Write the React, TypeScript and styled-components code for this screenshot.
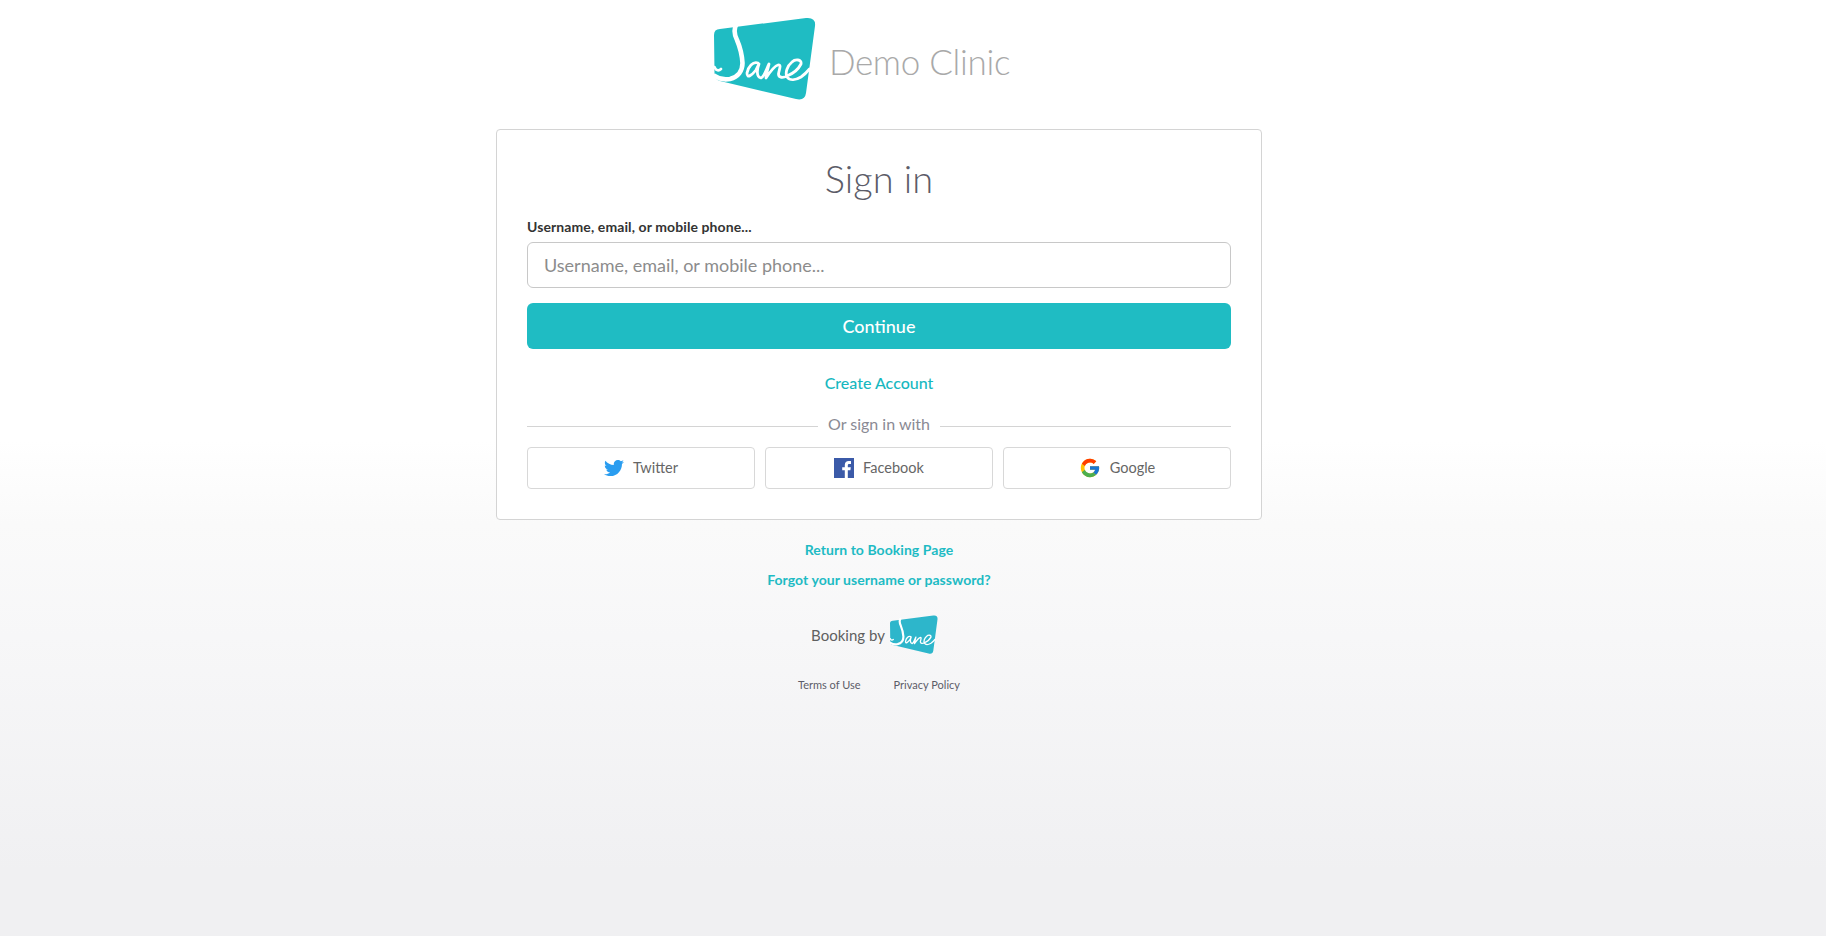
import React from 'react';
import styled, {createGlobalStyle} from "styled-components";
import {FaTwitter} from "react-icons/fa";
import {FcGoogle} from "react-icons/fc";

const GlobalStyle = createGlobalStyle`
    html, body {
        margin: 0;
        padding: 0;
    }
    body {
        font-family: "Lato", "Open Sans", "Liberation Sans", sans-serif;
    }
`

const JaneLogo = ({width, color}: {width: number, color: string}) => (
    <svg width={width} viewBox="0 0 102 84" role="img" aria-label="Jane logo" style={{display: 'block', flexShrink: 0}}>
        <path d="M6 12 L92 1 Q102 0 101 9 L92 76 Q91 84 82 82 L6 64 Q0 62 .5 56 L0 18 Q0 12 6 12 Z" fill={color}/>
        <g fill="none" stroke="#fff" strokeLinecap="round" strokeLinejoin="round">
            <path d="M22 8 C19 14 21 19 23 23 C26 30 28 38 28.500 46 C28.500 54 24 60 16 62 C10 63 5 62 1 59" strokeWidth="4.600"/>
            <path d="M.5 50 C2 54 5 54 7 52" strokeWidth="2.600"/>
            <path d="M44 46 C39 44 34 50 33 56 C33 62 38 58 42 53 L45 47 C43 52 42 60 47 61 C50 60 52 53 55 47 C54 52 52 57 52 61 C56 55 60 49 64 48 C68 47 65 53 64.500 57 C64.500 61 69 61 73 59 C78 57 84 53 87 47 C88 42 81 42 78 45 C73 49 71 56 73 60 C76 64 82 63 87 60 C90 58 93 55 95.500 52" strokeWidth="2.800"/>
        </g>
    </svg>
)

const FacebookIcon = () => (
    <svg width="20" height="20" viewBox="0 0 20 20">
        <rect width="20" height="20" fill="#3b5aa8"/>
        <path d="M13.8 20v-7.7h2.6l.4-3h-3V7.4c0-.9.2-1.5 1.5-1.5H17V3.200c-.3 0-1.200-.1-2.300-.1-2.300 0-3.900 1.400-3.900 4v2.200H8.200v3h2.600V20z" fill="#fff"/>
    </svg>
)

const socials = [
    {name: 'Twitter', icon: <FaTwitter size={20} color="#2a9df0"/>},
    {name: 'Facebook', icon: <FacebookIcon/>},
    {name: 'Google', icon: <FcGoogle size={22}/>},
]

export default function App() {
    return (
        <Page>
            <GlobalStyle/>
            <Column>
                <Header>
                    <JaneLogo width={102} color="#1fbcc3"/>
                    <ClinicName>Demo Clinic</ClinicName>
                </Header>
                <Card>
                    <Title>Sign in</Title>
                    <Label htmlFor="login">Username, email, or mobile phone...</Label>
                    <Input id="login" placeholder="Username, email, or mobile phone..."/>
                    <ContinueButton>Continue</ContinueButton>
                    <CreateAccount href="#">Create Account</CreateAccount>
                    <Divider><span>Or sign in with</span></Divider>
                    <SocialRow>
                        {socials.map(s => (
                            <SocialButton key={s.name}>
                                {s.icon}
                                <SocialName>{s.name}</SocialName>
                            </SocialButton>
                        ))}
                    </SocialRow>
                </Card>
                <FooterLink href="#" $top={21}>Return to Booking Page</FooterLink>
                <FooterLink href="#" $top={13}>Forgot your username or password?</FooterLink>
                <BookingBy>
                    <span>Booking by</span>
                    <JaneLogo width={48} color="#2db6cb"/>
                </BookingBy>
                <LegalRow>
                    <a href="#">Terms of Use</a>
                    <a href="#">Privacy Policy</a>
                </LegalRow>
            </Column>
        </Page>
    );
}

const Page = styled.div`
    min-height: 936px;
    box-sizing: border-box;
    background: linear-gradient(to bottom, #fff 0%, #fff 47%, #fafafa 56%, #f7f7f8 68%, #f0f0f2 93%, #f0f0f2 100%);
    padding-left: 496px;
`

const Column = styled.div`
    width: 766px;
    display: flex;
    flex-direction: column;
    align-items: center;
`

const Header = styled.div`
    display: flex;
    align-items: center;
    gap: 13px;
    height: 117px;
    padding-bottom: 12px;
    margin-left: -34px;
`

const ClinicName = styled.div`
    font-size: 35px;
    font-weight: 300;
    color: #a9a9a9;
    letter-spacing: -0.3px;
    margin-top: 4px;
`

const Card = styled.div`
    width: 100%;
    height: 391px;
    box-sizing: border-box;
    padding: 0 30px;
    background: #fff;
    border: 1px solid #d4d4d4;
    border-radius: 4px;
`

const Title = styled.h1`
    margin: 24px 0 0;
    height: 48px;
    line-height: 48px;
    font-size: 38px;
    font-weight: 300;
    text-align: center;
    color: #5c5c68;
`

const Label = styled.label`
    display: block;
    margin-top: 16px;
    line-height: 18px;
    font-size: 14px;
    font-weight: 700;
    letter-spacing: 0.1px;
    color: #333;
`

const Input = styled.input`
    display: block;
    width: 100%;
    height: 46px;
    margin-top: 6px;
    box-sizing: border-box;
    padding: 0 16px;
    border: 1.5px solid #c8c8c8;
    border-radius: 6px;
    font-family: inherit;
    font-size: 18px;
    color: #333;
    outline: none;

    &::placeholder {
        color: #8c8c8c;
        opacity: 1;
    }
`

const ContinueButton = styled.button`
    display: block;
    width: 100%;
    height: 46px;
    margin-top: 15px;
    border: none;
    border-radius: 6px;
    background: #1fbcc3;
    color: #fff;
    font-family: inherit;
    font-size: 18px;
    font-weight: 500;
`

const CreateAccount = styled.a`
    display: block;
    margin-top: 23px;
    line-height: 22px;
    text-align: center;
    font-size: 16px;
    font-weight: 500;
    color: #17b8c0;
    text-decoration: none;
`

const Divider = styled.div`
    display: flex;
    align-items: center;
    gap: 10px;
    height: 22px;
    margin-top: 18px;
    font-size: 16px;
    color: #8a8a94;

    &::before, &::after {
        content: "";
        flex: 1;
        height: 1px;
        margin-top: 7px;
        background: #d4d4d4;
    }
`

const SocialRow = styled.div`
    display: grid;
    grid-template-columns: repeat(3, 1fr);
    gap: 10px;
    margin-top: 13px;
`

const SocialButton = styled.button`
    display: flex;
    align-items: center;
    justify-content: center;
    gap: 9px;
    height: 42px;
    padding: 0;
    background: #fff;
    border: 1px solid #d8d8d8;
    border-radius: 4px;
    font-family: inherit;
    font-size: 14.5px;
    color: #666;
`

const SocialName = styled.span`
    margin-bottom: 2px;
`

const FooterLink = styled.a<{$top: number}>`
    margin-top: ${props => props.$top}px;
    line-height: 17px;
    font-size: 14px;
    font-weight: 700;
    letter-spacing: 0.05px;
    color: #1ebbc4;
    text-decoration: none;
`

const BookingBy = styled.div`
    display: flex;
    align-items: center;
    gap: 5px;
    height: 40px;
    margin-top: 27px;
    margin-left: -9px;
    font-size: 15px;
    font-weight: 400;
    color: #5f5f5f;
`

const LegalRow = styled.div`
    display: flex;
    gap: 33px;
    margin-top: 23px;
    font-size: 11px;

    a {
        color: #5c5c68;
        text-decoration: none;
    }
`
